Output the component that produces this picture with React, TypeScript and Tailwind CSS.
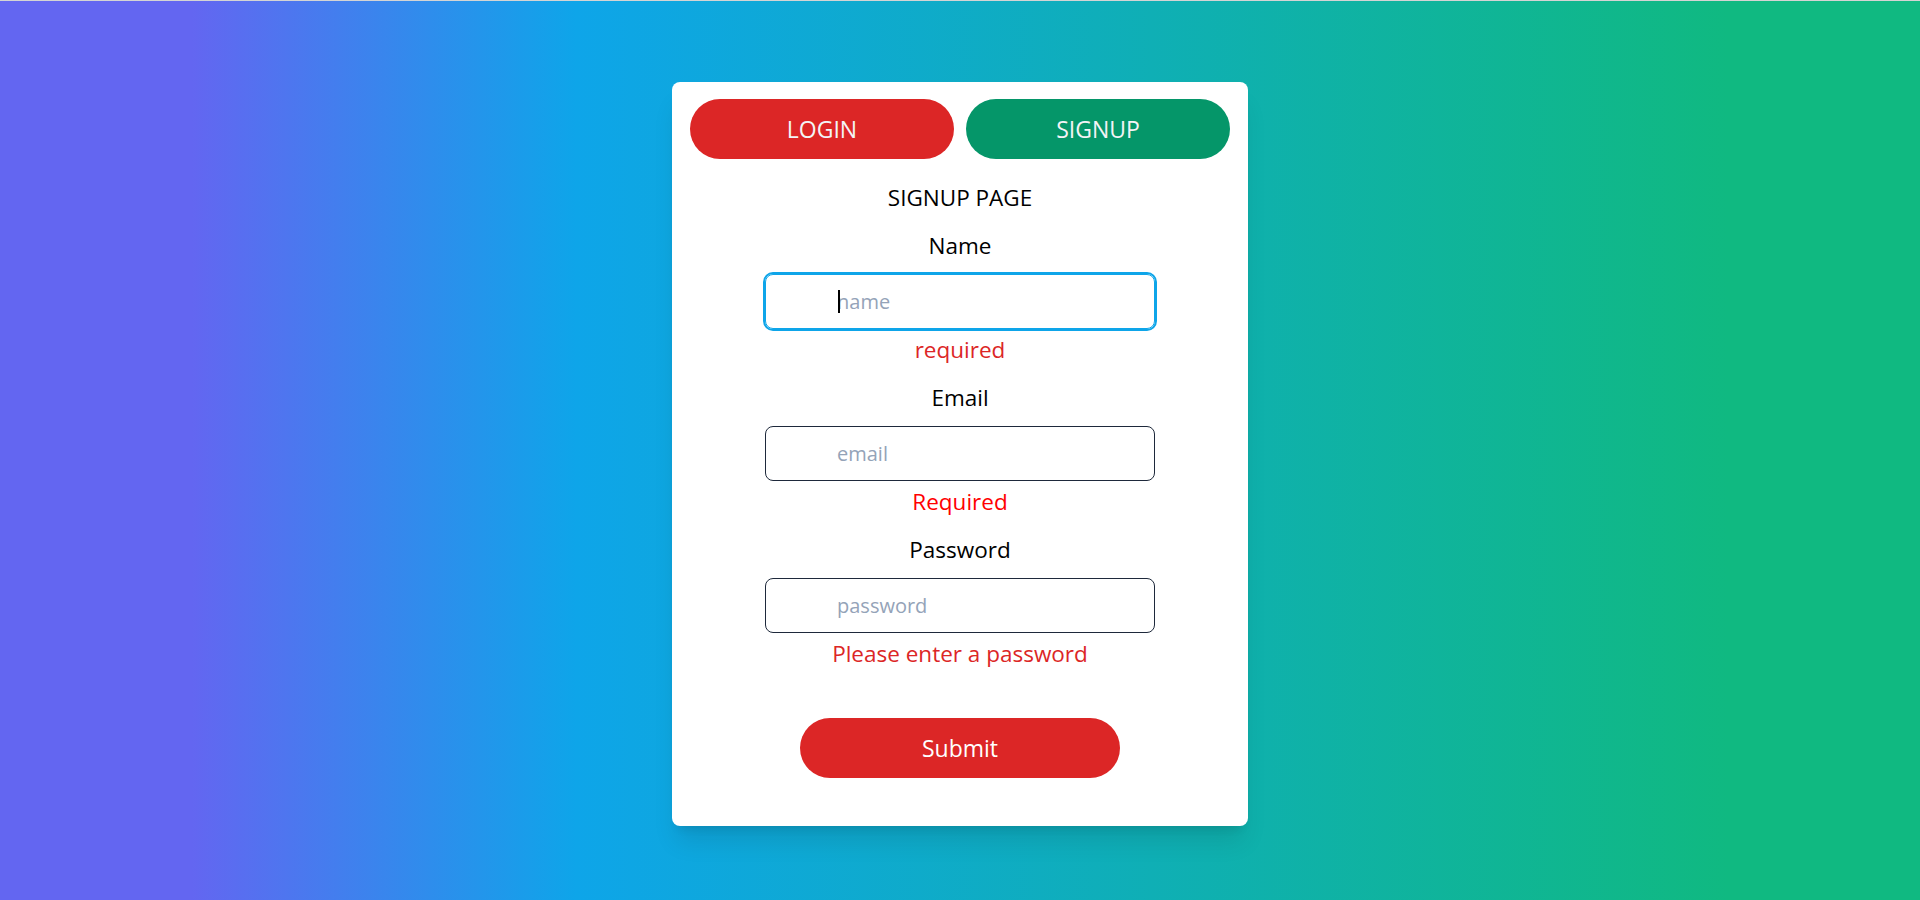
import { useState } from 'react';

type Field = {
  key: string;
  label: string;
  type: string;
  placeholder: string;
  error: string;
  errorClass: string;
};

const fields: Field[] = [
  { key: 'name', label: 'Name', type: 'text', placeholder: 'name', error: 'required', errorClass: 'text-[#dc2626]' },
  { key: 'email', label: 'Email', type: 'email', placeholder: 'email', error: 'Required', errorClass: 'text-[#ff0000]' },
  { key: 'password', label: 'Password', type: 'password', placeholder: 'password', error: 'Please enter a password', errorClass: 'text-[#dc2626]' },
];

export default function App() {
  const [mode, setMode] = useState<'login' | 'signup'>('signup');
  const [values, setValues] = useState<Record<string, string>>({ name: '', email: '', password: '' });

  return (
    <div className="min-h-screen w-full border-t border-[#d4d4d4] bg-[linear-gradient(to_right,#6366f1_10%,#0ea5e9_30%,#10b981_90%)] pt-[81px] pb-10 font-['Open_Sans','Noto_Sans',sans-serif]">
      <div className="mx-auto w-[576px] rounded-lg bg-white px-[18px] pt-[17px] pb-12 shadow-xl">
        <div className="flex gap-3">
          <button
            type="button"
            onClick={() => setMode('login')}
            className="h-[60px] flex-1 rounded-full bg-[#dc2626] text-[23px] text-gray-100"
          >
            LOGIN
          </button>
          <button
            type="button"
            onClick={() => setMode('signup')}
            className="h-[60px] flex-1 rounded-full bg-[#059669] text-[23px] text-gray-100"
          >
            SIGNUP
          </button>
        </div>

        <form className="flex flex-col items-center" onSubmit={(e) => e.preventDefault()}>
          <h1 className="mt-[23px] text-[22.5px] leading-8 text-black">
            {mode === 'signup' ? 'SIGNUP PAGE' : 'LOGIN PAGE'}
          </h1>

          {fields.map((f, i) => (
            <div key={f.key} className="mt-4 flex flex-col items-center">
              <label htmlFor={f.key} className="text-[22.5px] leading-8 text-black">
                {f.label}
              </label>
              <div className="relative mt-3">
                <input
                  id={f.key}
                  type={f.type}
                  placeholder={f.placeholder}
                  autoFocus={i === 0}
                  value={values[f.key]}
                  onChange={(e) => setValues({ ...values, [f.key]: e.target.value })}
                  className={`block h-[55px] w-[390px] rounded-lg border pl-[71px] text-[20px] text-black placeholder:text-[#94a3b8] ${
                    i === 0
                      ? 'border-[#0ea5e9] outline-2 outline-offset-0 outline-[#0ea5e9] focus:outline-2 focus:outline-[#0ea5e9]'
                      : 'border-[#1e293b] focus:outline-none'
                  }`}
                />
                {/* caret shown in the focused field */}
                {i === 0 && values.name === '' && (
                  <span className="pointer-events-none absolute top-[16px] left-[73px] h-[23px] w-[2px] bg-black" />
                )}
              </div>
              <p className={`mt-[5px] text-[22.5px] leading-8 ${f.errorClass}`}>{f.error}</p>
            </div>
          ))}

          <button
            type="submit"
            className="mt-12 h-[60px] w-80 rounded-full bg-[#dc2626] text-[23px] text-white"
          >
            Submit
          </button>
        </form>
      </div>
    </div>
  );
}
